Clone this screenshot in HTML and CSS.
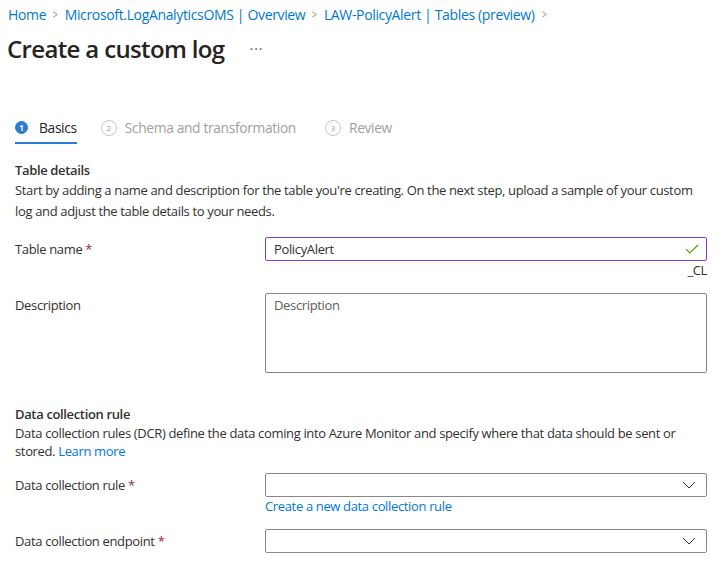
FILE: index.html
```html
<!DOCTYPE html>
<html lang="en">
<head>
<meta charset="utf-8">
<title>Create a custom log</title>
<link rel="stylesheet" href="styles.css">
</head>
<body>
<nav class="crumbs">
  <a class="crumb" href="#">Home</a><span class="sep">&gt;</span>
  <a class="crumb" href="#">Microsoft.LogAnalyticsOMS | Overview</a><span class="sep">&gt;</span>
  <a class="crumb" href="#">LAW-PolicyAlert | Tables (preview)</a><span class="sep">&gt;</span>
</nav>
<header class="titlebar">
  <h1 class="title">Create a custom log</h1>
  <span class="more">···</span>
</header>
<main class="content">
  <div class="steps">
    <div class="step active"><span class="num">1</span><span class="step-label">Basics</span></div>
    <div class="step"><span class="num">2</span><span class="step-label">Schema and transformation</span></div>
    <div class="step"><span class="num">3</span><span class="step-label">Review</span></div>
  </div>

  <section class="section">
    <h2 class="sec-title">Table details</h2>
    <p class="sec-text loose">Start by adding a name and description for the table you're creating. On the next step, upload a sample of your custom log and adjust the table details to your needs.</p>
  </section>

  <div class="row row-name">
    <label class="label">Table name <span class="req">*</span></label>
    <div class="field">
      <div class="input focused">
        <span class="value">PolicyAlert</span>
        <svg class="check" width="14" height="10" viewBox="0 0 14 10"><path d="M1 5.2 L4.8 9 L13 1" fill="none" stroke="#57a300" stroke-width="1.2"/></svg>
      </div>
      <div class="suffix">_CL</div>
    </div>
  </div>

  <div class="row row-desc">
    <label class="label">Description</label>
    <div class="field">
      <div class="textarea"><span class="placeholder">Description</span></div>
    </div>
  </div>

  <section class="section section-dcr">
    <h2 class="sec-title">Data collection rule</h2>
    <p class="sec-text">Data collection rules (DCR) define the data coming into Azure Monitor and specify where that data should be sent or stored. <a class="link" href="#">Learn more</a></p>
  </section>

  <div class="row row-dcr">
    <label class="label">Data collection rule <span class="req">*</span></label>
    <div class="field">
      <div class="input select">
        <svg class="chev" width="14" height="8" viewBox="0 0 14 8"><path d="M1 1 L7 7 L13 1" fill="none" stroke="#323130" stroke-width="1"/></svg>
      </div>
      <a class="link create" href="#">Create a new data collection rule</a>
    </div>
  </div>

  <div class="row row-dce">
    <label class="label">Data collection endpoint <span class="req">*</span></label>
    <div class="field">
      <div class="input select">
        <svg class="chev" width="14" height="8" viewBox="0 0 14 8"><path d="M1 1 L7 7 L13 1" fill="none" stroke="#323130" stroke-width="1"/></svg>
      </div>
    </div>
  </div>
</main>
</body>
</html>
```
FILE: styles.css
```css
* { box-sizing: border-box; }
html, body {
  margin: 0;
  padding: 0;
  background: #fff;
  width: 728px;
  height: 576px;
  overflow: hidden;
}
body {
  font-family: "Open Sans", "Noto Sans", sans-serif;
  font-size: 13px;
  color: #323130;
  letter-spacing: -0.35px;
}
a { text-decoration: none; color: #0078d4; }

.crumbs {
  display: flex;
  align-items: center;
  padding: 0 0 0 8px;
  height: 28px;
  font-size: 14px;
}
.crumb { color: #0078d4; }
.sep {
  color: #8a8886;
  margin: 0 6px 0 6px;
  font-size: 12px;
  transform: scaleX(0.7);
}

.titlebar {
  display: flex;
  align-items: center;
  height: 40px;
  padding-left: 7px;
}
.title {
  margin: 0;
  font-size: 24px;
  font-weight: 600;
  letter-spacing: -0.65px;
  color: #252423;
}
.more {
  margin-left: 25px;
  color: #605e5c;
  font-size: 14px;
  letter-spacing: 1px;
}

.content {
  padding: 0 21px 0 15px;
}

.steps {
  display: flex;
  margin-top: 45px;
  height: 47px;
  align-items: flex-start;
}
.step {
  display: flex;
  align-items: center;
  height: 29px;
  margin-right: 29px;
  color: #a19f9d;
  font-size: 13.8px;
}
.step .num {
  width: 16px;
  height: 16px;
  border-radius: 50%;
  border: 1px solid #c8c6c4;
  font-size: 8px;
  display: flex;
  align-items: center;
  justify-content: center;
  margin-right: 8px;
  letter-spacing: 0;
  color: #a19f9d;
}
.step.active {
  color: #252423;
  border-bottom: 2px solid #2b7cd3;
  height: 31px;
  margin-right: 24px;
}
.step.active .num {
  background: #2b7cd3;
  border-color: #2b7cd3;
  color: #fff;
  width: 13px;
  height: 13px;
  font-weight: 700;
  margin-right: 11px;
}

.section { margin: 0; }
.sec-title {
  margin: 0;
  font-size: 13px;
  font-weight: 600;
  line-height: 20px;
  color: #323130;
}
.sec-text {
  margin: 0;
  line-height: 18px;
}
.sec-text.loose { line-height: 21px; }

.row {
  display: flex;
  align-items: flex-start;
}
.label {
  width: 250px;
  flex: none;
  line-height: 24px;
}
.req { color: #a4262c; }
.field { flex: 1; display: flex; flex-direction: column; }

.row-name { margin-top: 15px; }
.row-desc { margin-top: 14px; }
.section-dcr { margin-top: 31px; }
.row-dcr { margin-top: 13px; }
.row-dce { margin-top: 14px; }

.input {
  height: 24px;
  border: 1px solid #8a8886;
  border-radius: 2px;
  display: flex;
  align-items: center;
  padding: 0 8px;
  justify-content: space-between;
}
.input.focused { border-color: #8a3cc4; }
.value { color: #323130; }
.check { margin-right: -1px; }
.suffix {
  text-align: right;
  line-height: 18px;
  color: #323130;
}
.textarea {
  height: 80px;
  border: 1px solid #8a8886;
  border-radius: 2px;
  padding: 2px 8px;
}
.placeholder { color: #605e5c; }
.select { justify-content: flex-end; padding-right: 10px; }
.link { color: #0078d4; }
.create { line-height: 18px; }
```
